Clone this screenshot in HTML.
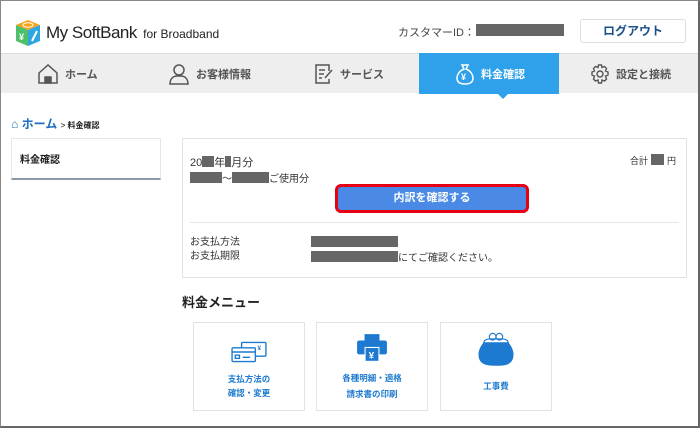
<!DOCTYPE html>
<html><head><meta charset="utf-8"><style>
*{margin:0;padding:0;box-sizing:border-box}
body{width:700px;height:428px;overflow:hidden;background:#fff;font-family:"Liberation Sans","Noto Sans CJK JP",sans-serif;position:relative;color:#333}
.a{position:absolute}
.frame{left:0;top:0;width:700px;height:428px;border-right:2px solid #666;border-bottom:2px solid #666;border-top:1px solid #888;border-left:1px solid #888;z-index:9;pointer-events:none}
.gb{background:#666}
.nav{left:0;top:53px;width:700px;height:40px;background:#eeeeee;border-top:1px solid #ddd}
.ni{top:0;height:40px;display:flex;align-items:center;font-size:11px;color:#555;font-weight:bold}
.ni svg{margin-right:6px}
.card{border:1px solid #e2e2e2;background:#fff;width:112px;height:89px;top:322px;text-align:center;color:#1d7ad0;font-size:8.5px;font-weight:bold;line-height:16px}
</style></head><body>
<div class="a frame"></div>
<svg class="a" style="left:14px;top:19px" width="28" height="28" viewBox="0 0 28 28">
<polygon points="2,6 14,1 26,6 14,11" fill="#f7a21b"/>
<polygon points="2,6 14,11 14,27 2,22" fill="#4fc06a"/>
<polygon points="14,11 26,6 26,22 14,27" fill="#2fa6e0"/>
<ellipse cx="14" cy="6" rx="5" ry="2.2" fill="none" stroke="#fff" stroke-width="1"/>
<text x="5" y="21" font-size="9" fill="#fff" font-weight="bold" font-family="Liberation Sans">¥</text>
<path d="M18 22 L23 12" stroke="#fff" stroke-width="2"/>
</svg>
<div class="a" style="left:46px;top:23px;font-size:17px;color:#222;letter-spacing:-0.5px">My SoftBank <span style="font-size:12px;letter-spacing:0;margin-left:2px">for Broadband</span></div>
<div class="a" style="left:398px;top:24px;font-size:11px;color:#444">カスタマーID：</div>
<div class="a gb" style="left:476px;top:24px;width:88px;height:12px"></div>
<div class="a" style="left:580px;top:19px;width:106px;height:24px;border:1px solid #ddd;border-radius:3px;text-align:center;line-height:22px;font-size:12px;font-weight:bold;color:#1a4f8b">ログアウト</div>
<div class="a nav">
<div class="a ni" style="left:37px"><svg width="22" height="22" viewBox="0 0 22 22" fill="none" stroke="#555" stroke-width="1.5"><path d="M2 10 L11 2 L20 10 V20 H2 Z"/><rect x="8" y="14" width="6" height="6" fill="#555"/></svg>ホーム</div>
<div class="a ni" style="left:168px"><svg width="22" height="22" viewBox="0 0 22 22" fill="none" stroke="#555" stroke-width="1.5"><circle cx="11" cy="7" r="5"/><path d="M2 21 C2 15 6 13 9 13 H13 C16 13 20 15 20 21 Z"/></svg>お客様情報</div>
<div class="a ni" style="left:314px"><svg width="20" height="22" viewBox="0 0 20 22" fill="none" stroke="#555" stroke-width="1.5"><path d="M15 8 V2 H2 V20 H15 V16"/><path d="M5 7H11M5 11H10M5 15H8"/><path d="M11 15 L18 7"/></svg>サービス</div>
<div class="a" style="left:419px;top:-1px;width:140px;height:41px;background:#2ea1ea"></div>
<div class="a" style="left:498px;top:40px;width:0;height:0;border-left:5px solid transparent;border-right:5px solid transparent;border-top:5px solid #2ea1ea"></div>
<div class="a ni" style="left:455px;color:#fff"><svg width="20" height="22" viewBox="0 0 20 22" fill="none" stroke="#fff" stroke-width="1.5"><path d="M7 2 H13 L11 6 C16 8 18 12 18 15 C18 19 15 21 10 21 C5 21 2 19 2 15 C2 12 4 8 9 6 Z"/><text x="6" y="17" font-size="9" fill="#fff" stroke="none" font-family="Liberation Sans">¥</text></svg>料金確認</div>
<div class="a ni" style="left:590px"><svg width="20" height="20" viewBox="0 0 20 20" fill="none" stroke="#555" stroke-width="1.4"><circle cx="10" cy="10" r="3"/><path d="M8.5 1 H11.5 L12 3.5 L14.5 2.5 L16.5 4.5 L15.5 7 L18 8 V11 L15.5 12 L16.5 15 L14.5 17 L12 16 L11.5 19 H8.5 L8 16 L5.5 17 L3.5 15 L4.5 12 L2 11 V8 L4.5 7 L3.5 4.5 L5.5 2.5 L8 3.5 Z"/></svg>設定と接続</div>
</div>
<div class="a" style="left:11px;top:115px;font-size:12px;color:#1d6fbf;font-weight:bold">⌂ ホーム <span style="font-size:8px;color:#555">&gt; </span><span style="font-size:8px;color:#222">料金確認</span></div>
<div class="a" style="left:11px;top:138px;width:150px;height:42px;border:1px solid #e6e6e6;border-bottom:2px solid #8c9aa8;font-size:10px;font-weight:bold;color:#222;padding:12px 0 0 8px">料金確認</div>
<div class="a" style="left:182px;top:138px;width:505px;height:140px;border:1px solid #e2e2e2"></div>
<div class="a" style="left:190px;top:154px;font-size:11px;color:#333">20<span style="display:inline-block;width:12px;height:11px;background:#666;vertical-align:-1px"></span>年<span style="display:inline-block;width:6px;height:11px;background:#666;vertical-align:-1px"></span>月分</div>
<div class="a" style="left:190px;top:170px;font-size:10px;color:#333"><span style="display:inline-block;width:32px;height:11px;background:#666;vertical-align:-1px"></span>～<span style="display:inline-block;width:37px;height:11px;background:#666;vertical-align:-1px"></span>ご使用分</div>
<div class="a" style="left:630px;top:154px;font-size:9px;color:#333">合計<span style="display:inline-block;width:13px;height:11px;background:#666;vertical-align:-1px;margin:0 3px"></span>円</div>
<div class="a" style="left:335px;top:184px;width:194px;height:29px;border:3px solid #e60012;border-radius:6px;background:#4a8ae6;color:#fff;font-size:11px;font-weight:bold;text-align:center;line-height:23px">内訳を確認する</div>
<div class="a" style="left:190px;top:222px;width:489px;height:1px;background:#e6e6e6"></div>
<div class="a" style="left:190px;top:236px;font-size:10px;color:#333;line-height:14px">お支払方法<br>お支払期限</div>
<div class="a gb" style="left:311px;top:236px;width:87px;height:11px"></div>
<div class="a gb" style="left:311px;top:251px;width:87px;height:11px"></div>
<div class="a" style="left:398px;top:249px;font-size:10px;color:#333">にてご確認ください。</div>
<div class="a" style="left:182px;top:292px;font-size:13px;font-weight:bold;color:#222">料金メニュー</div>
<div class="a card" style="left:193px"><svg style="margin-top:18px" width="36" height="22" viewBox="0 0 34 20" fill="none" stroke="#1d7ad0" stroke-width="1.3"><rect x="10" y="1" width="23" height="13" rx="1"/><text x="25" y="8" font-size="6" fill="#1d7ad0" stroke="none">¥</text><rect x="1" y="6" width="22" height="13" rx="1" fill="#fff"/><path d="M1 10H23"/><rect x="4" y="13" width="4" height="3"/><path d="M11 15H18"/></svg><div style="margin-top:4px;line-height:14px">支払方法の<br>確認・変更</div></div>
<div class="a card" style="left:316px"><svg style="margin-top:10px" width="32" height="30" viewBox="0 0 30 28"><rect x="8" y="1" width="14" height="6" fill="#1d7ad0"/><rect x="1" y="7" width="28" height="13" rx="2" fill="#1d7ad0"/><rect x="8" y="13" width="14" height="14" fill="#fff"/><rect x="9" y="14" width="12" height="12" fill="#1d7ad0"/><text x="12" y="24" font-size="9" fill="#fff" font-family="Liberation Sans">¥</text></svg><div style="margin-top:2px;line-height:16px">各種明細・適格<br>請求書の印刷</div></div>
<div class="a card" style="left:440px"><svg style="margin-top:8px" width="38" height="36" viewBox="0 0 34 32"><circle cx="14" cy="5" r="3" fill="none" stroke="#1d7ad0" stroke-width="1"/><circle cx="20" cy="5" r="3" fill="none" stroke="#1d7ad0" stroke-width="1"/><path d="M6 11 Q6 7 12 7 H22 Q28 7 28 11" fill="none" stroke="#1d7ad0" stroke-width="1"/><path d="M6 10 H28 C33 16 34 22 31 27 C28 31 22 31 17 31 C12 31 6 31 3 27 C0 22 1 16 6 10 Z" fill="#1d7ad0"/></svg><div style="margin-top:6px">工事費</div></div>
</body></html>
